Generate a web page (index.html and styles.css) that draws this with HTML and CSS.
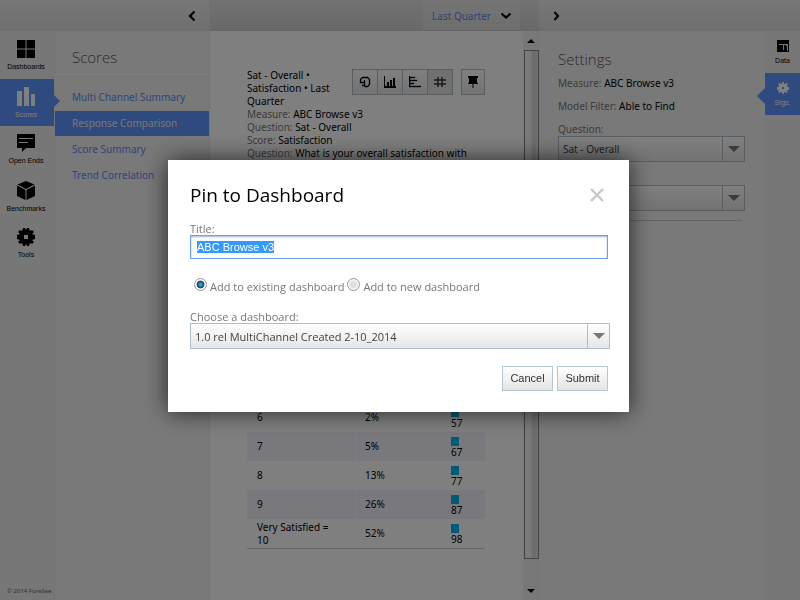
FILE: index.html
```html
<!DOCTYPE html>
<html lang="en">
<head>
<meta charset="utf-8">
<title>Response Comparison</title>
<link rel="stylesheet" href="styles.css">
</head>
<body>
<div class="app">
  <section class="left">
    <header class="bar bar-left">
      <button class="plain" aria-label="Collapse menu"><svg width="8" height="12" viewBox="0 0 8 12"><path d="M6.500 1.500 2 6l4.500 4.500" fill="none" stroke="#000" stroke-width="2.200"/></svg></button>
    </header>
    <div class="left-body">
      <nav class="nav">
        <a href="#" class="nav-item">
          <svg width="18" height="18" viewBox="0 0 18 18"><path d="M0 0h8.500v8.500H0zM9.500 0H18v8.500H9.500zM0 9.500h8.500V18H0zM9.500 9.500H18V18H9.500z"/></svg>
          <span>Dashboards</span></a>
        <a href="#" class="nav-item active">
          <svg width="18" height="19" viewBox="0 0 18 19"><path d="M0 4h5v15H0zM7 0h5v19H7zM14 7h4v12h-4z"/></svg>
          <span>Scores</span></a>
        <a href="#" class="nav-item">
          <svg width="18" height="18" viewBox="0 0 18 18"><path d="M0 0h18v14H9l-4 4v-4H0z"/><path d="M2 4.500h14M2 8.500h9" stroke="#eee" stroke-width="1"/></svg>
          <span>Open Ends</span></a>
        <a href="#" class="nav-item">
          <svg width="18" height="19" viewBox="0 0 18 19"><path d="M9 0l8.500 3.500L9 8 .5 3.500zM0 4.500l8.500 4.500v10L0 15zM18 4.500L9.500 9v10l8.500-4z"/></svg>
          <span>Benchmarks</span></a>
        <a href="#" class="nav-item">
          <svg width="18" height="18" viewBox="0 0 18 18"><path fill-rule="evenodd" d="M6 0h2l1 2 1-2h2l1 3 2-1 2 2-2 2 3 1v4l-3 1 2 2-2 2-2-1-1 3h-2l-1-2-1 2H6l-1-3-2 1-2-2 2-2-3-1V7l3-1-2-2 2-2 2 1zM7 7v4h4V7z"/></svg>
          <span>Tools</span></a>
        <small class="copyright">© 2014 ForeSee</small>
      </nav>
      <aside class="menu">
        <h2>Scores</h2>
        <ul>
          <li><a href="#">Multi Channel Summary</a></li>
          <li><a href="#" class="current">Response Comparison</a></li>
          <li><a href="#">Score Summary</a></li>
          <li><a href="#">Trend Correlation</a></li>
        </ul>
      </aside>
    </div>
  </section>

  <main class="main">
    <header class="bar bar-main">
      <button class="period">Last Quarter
        <svg width="12" height="8" viewBox="0 0 12 8"><path d="M1.500 1.500 6 5.500l4.500-4" fill="none" stroke="#000" stroke-width="2.200"/></svg></button>
    </header>
    <div class="main-body">
      <div class="report">
        <div class="report-text">
          <div class="tools">
            <div class="group">
              <button aria-label="Pie chart"><svg width="12" height="12" viewBox="0 0 12 12"><path d="M3.500 1.500h5l2 2v5l-2 2h-3M3.500 1.500l-2 2v3h4M3 9.500h2.500V4" fill="none" stroke="#000" stroke-width="1.300"/></svg></button>
              <button aria-label="Column chart"><svg width="12" height="12" viewBox="0 0 12 12"><path d="M0 0h1v10h11v2H0zM3 6h2v4H3zM6 4h2v6H6zM9 2h2v8H9z"/></svg></button>
              <button aria-label="Bar chart"><svg width="12" height="12" viewBox="0 0 12 12"><path d="M0 0h1v10h11v1H0zM1 1h5v1H1zM1 4h7v1H1zM1 7h4v1H1z" stroke="#000" stroke-width=".4"/></svg></button>
              <button aria-label="Table" class="pressed"><svg width="12" height="12" viewBox="0 0 12 12"><path d="M4 1v10M8 1v10M0 4h12M0 8h12" stroke="#333" stroke-width="1.400"/></svg></button>
            </div>
            <button aria-label="Pin"><svg width="12" height="12" viewBox="0 0 12 12"><path d="M1 0h10v2h-1v5h1v1H6.500v4h-1V8H1V7h1V2H1z"/></svg></button>
          </div>
          <h1>Sat - Overall • Satisfaction • Last Quarter</h1>
          <p><span>Measure:</span> ABC Browse v3</p>
          <p><span>Question:</span> Sat - Overall</p>
          <p><span>Score:</span> Satisfaction</p>
          <p><span>Question:</span> What is your overall satisfaction with</p>
        </div>
        <table class="scores">
          <tbody>
            <tr><td>6</td><td>2%</td><td><i></i>57</td></tr>
            <tr><td>7</td><td>5%</td><td><i></i>67</td></tr>
            <tr><td>8</td><td>13%</td><td><i></i>77</td></tr>
            <tr><td>9</td><td>26%</td><td><i></i>87</td></tr>
            <tr><td>Very Satisfied = 10</td><td>52%</td><td><i></i>98</td></tr>
          </tbody>
        </table>
      </div>
      <div class="scroll">
        <svg width="8" height="4" viewBox="0 0 8 4"><path d="M4 0l4 4H0z"/></svg>
        <div class="thumb"></div>
        <svg width="8" height="4" viewBox="0 0 8 4"><path d="M4 4L0 0h8z"/></svg>
      </div>
    </div>
  </main>

  <section class="right">
    <header class="bar bar-right">
      <button class="plain" aria-label="Collapse settings"><svg width="8" height="12" viewBox="0 0 8 12"><path d="M1.500 2 5 6 1.500 10" fill="none" stroke="#000" stroke-width="2.200"/></svg></button>
    </header>
    <div class="right-body">
      <form class="settings">
        <h2>Settings</h2>
        <p><span>Measure:</span> ABC Browse v3</p>
        <p><span>Model Filter:</span> Able to Find</p>
        <label for="question">Question:</label>
        <div class="select"><select id="question"><option>Sat - Overall</option></select><svg width="12" height="6" viewBox="0 0 12 6"><path d="M0 0h12L6 6z"/></svg></div>
        <div class="select second"><select aria-label="Score"><option></option></select><svg width="12" height="6" viewBox="0 0 12 6"><path d="M0 0h12L6 6z"/></svg></div>
        <hr>
      </form>
      <nav class="strip">
        <a href="#" class="strip-item"><svg width="12" height="12" viewBox="0 0 12 12"><path fill-rule="evenodd" d="M0 0h12v12H0zM2 4v1h4v5h1V5h2v1h1v5h1V4z"/></svg><span>Data</span></a>
        <a href="#" class="strip-item active"><svg width="12" height="12" viewBox="0 0 12 12"><path fill-rule="evenodd" d="M5 0h2v2h1l1-1 2 1-1 2v1h2v3h-2v1l1 1-2 1-1-1H7v2H5v-2H4l-1 1-2-1 1-2V8H0V5h2V4L1 2l2-1 1 1h1zM5 5v2h2V5z"/></svg><span>Stgs.</span></a>
      </nav>
    </div>
  </section>
</div>

<div class="backdrop">
  <form class="dialog" role="dialog" aria-labelledby="dialog-title">
    <header>
      <h2 id="dialog-title">Pin to Dashboard</h2>
      <button type="button" class="plain" aria-label="Close"><svg width="14" height="14" viewBox="0 0 14 14"><path d="M1 1l12 12M13 1L1 13" stroke="#c8c8c8" stroke-width="2.400"/></svg></button>
    </header>
    <label for="pin-title">Title:</label>
    <input type="text" id="pin-title" value="ABC Browse v3">
    <div class="choices">
      <input type="radio" name="target" id="existing" checked><label for="existing">Add to existing dashboard</label>
      <input type="radio" name="target" id="new"><label for="new">Add to new dashboard</label>
    </div>
    <label for="dashboard">Choose a dashboard:</label>
    <div class="select"><select id="dashboard"><option>1.0 rel MultiChannel Created 2-10_2014</option></select><svg width="12" height="6" viewBox="0 0 12 6"><path d="M0 0h12L6 6z"/></svg></div>
    <footer>
      <button type="button">Cancel</button>
      <button type="button">Submit</button>
    </footer>
  </form>
</div>
<script src="script.js"></script>
</body>
</html>
```
FILE: script.js
```js
const title = document.getElementById("pin-title");
title.focus();
title.select();
```
FILE: styles.css
```css
* { box-sizing: border-box; }
body {
  margin: 0;
  font: 10px/13px "Noto Sans", sans-serif;
  color: #000;
  background: #fff;
}
h1, h2, p, ul { margin: 0; padding: 0; font-weight: normal; }
h1 { font-size: 10px; }
h2 { font: 300 15px/20px "Open Sans", sans-serif; color: #555; }
ul { list-style: none; }
a { text-decoration: none; }
svg { display: block; flex: none; }
button, input, select { font: inherit; color: inherit; margin: 0; }
.plain { border: 0; padding: 0; background: none; }

.app { display: grid; grid-template-columns: 210px 1fr 261px; min-height: 100vh; }
.left, .main, .right { display: flex; flex-direction: column; min-width: 0; }
.bar {
  display: flex;
  align-items: center;
  height: 31px;
  background: linear-gradient(#f0f0f0, #dedede);
}
.bar-left { justify-content: flex-end; padding-right: 13px; border-right: 1px solid #e4e4e4; }
.bar-main { justify-content: flex-end; padding-right: 19px; background: linear-gradient(#e4e4e4, #d2d2d2); border-bottom: 1px solid #ccc; }
.bar-right { padding-left: 14px; }
.period {
  display: flex;
  align-items: center;
  gap: 9px;
  height: 30px;
  padding: 2px 8px 0 9px;
  border: 0;
  color: #5a88e0;
  background: linear-gradient(#eaeaea, #dcdcdc);
}

.left-body, .right-body, .main-body { display: flex; flex: 1; }
.left-body { background: #f3f3f3; border-right: 1px solid #e6e6e6; }
.nav { display: flex; flex-direction: column; width: 54px; background: #eee; padding-top: 1px; }
.nav-item, .strip-item {
  position: relative;
  display: flex;
  flex-direction: column;
  align-items: center;
  font: 7px/10px "Liberation Sans", sans-serif;
  color: #000;
}
.nav-item { height: 47px; padding: 8px 2px 0 0; gap: 4px; }
.active { background: #5c94ff; color: #fff; }
.active svg { fill: #fff; }
.active::after {
  content: "";
  position: absolute;
  width: 6px;
  height: 12px;
  background: #5c94ff;
}
.nav .active::after { left: 100%; top: 16px; clip-path: polygon(0 0, 100% 50%, 0 100%); }
.copyright { margin-top: auto; padding: 0 0 4px 7px; font-size: 6px; line-height: 10px; color: #666; white-space: nowrap; }
.menu { flex: 1; border-left: 1px solid #e8e8e8; }
.menu h2 { padding: 16px 0 7px 17px; border-bottom: 1px solid #fff; }
.menu ul { display: grid; gap: 1px; padding-top: 10px; }
.menu li a { display: block; padding: 6px 17px; color: #5a8cf0; }
.menu li .current { background: #5c94ff; color: #eee; }

.report { flex: 1; display: flex; flex-direction: column; justify-content: space-between; padding: 38px 38px 51px 37px; min-width: 0; }
.report-text p { white-space: nowrap; }
.report-text p span, .settings p span { color: #777; }
.tools { float: right; display: flex; gap: 9px; margin-left: 10px; }
.group { display: flex; }
.tools button {
  display: grid;
  place-items: center;
  width: 24px;
  height: 26px;
  padding: 0;
  border: 1px solid #aebfc4;
  background: linear-gradient(#fff, #e8e8e8);
}
.group button { width: 26px; margin-right: -1px; }
.tools .pressed { background: #e2e2e2; }
.scores { width: 100%; border-spacing: 0; table-layout: fixed; border-bottom: 1px solid #ccc; }
.scores td { height: 29px; padding: 0 9px; }
.scores td:nth-child(1) { width: 109px; padding: 0 24px 0 10px; border-right: 1px solid #fff; }
.scores td:nth-child(2) { width: 86px; }
.scores tr:nth-child(even) { background: #f0f1fa; }
.scores i { display: block; width: 8px; height: 9px; margin-top: 2px; background: #00b4f0; }
.scroll { display: flex; flex-direction: column; align-items: center; gap: 7px; width: 16px; padding: 8px 0 7px; background: #f0f0f0; }
.thumb { flex: 1; width: 15px; margin-bottom: 23px; border: 1px solid #888; background: linear-gradient(90deg, #f4f4f4 45%, #d6d6d8 60%, #e4e4e4); }

.right-body { background: #f3f3f3; border-left: 1px solid #eee; }
.settings { flex: 1; padding: 18px 20px 0 18px; }
.settings h2 { margin-bottom: 8px; }
.settings p { margin-bottom: 10px; }
.settings label { display: block; color: #777; }
.settings hr { height: 1px; margin: 9px 3px 0 0; border: 0; background: #c8c8c8; }
.strip { width: 35px; background: #eee; }
.strip-item { height: 42px; padding-top: 9px; gap: 4px; }
.strip .active::after { right: 100%; top: 15px; width: 8px; height: 16px; clip-path: polygon(100% 0, 100% 100%, 0 50%); }

.select { position: relative; }
.select select {
  appearance: none;
  display: block;
  width: 100%;
  height: 26px;
  padding: 0 28px 0 4px;
  border: 1px solid #aebfc8;
  border-radius: 0;
  color: #444;
  background: linear-gradient(#fff, #e6e6e6);
}
.select::after {
  content: "";
  position: absolute;
  top: 0;
  bottom: 0;
  right: 22px;
  width: 1px;
  background: #aebfc8;
}
.select svg { position: absolute; right: 5px; top: 10px; fill: #777; pointer-events: none; }
.settings .select { max-width: 187px; }
.second { margin-top: 23px; }

.backdrop {
  position: fixed;
  inset: 0;
  display: flex;
  align-items: flex-start;
  justify-content: center;
  padding: 160px 3px 0 0;
  background: rgba(0, 0, 0, .5);
}
.dialog {
  width: 461px;
  padding: 22px 19px 21px 22px;
  background: #fff;
  color: #777;
  font: 11px/13px "Open Sans", sans-serif;
  box-shadow: 0 0 22px rgba(0, 0, 0, .7);
}
.dialog header { display: flex; justify-content: space-between; align-items: center; padding-right: 6px; margin-bottom: 15px; }
.dialog h2 { font-size: 19px; font-weight: 400; line-height: 26px; color: #000; }
.dialog > label { display: block; line-height: 12px; }
.dialog input[type="text"] {
  display: block;
  width: calc(100% - 2px);
  height: 24px;
  padding: 0 6px;
  border: 1px solid #6ea2e8;
  outline: 0;
  box-shadow: inset 0 1px 2px #9ab8e0;
  font-family: "Liberation Sans", sans-serif;
}
.dialog input::selection { background: #3399ff; color: #fff; }
.choices { display: flex; align-items: center; gap: 3px; padding: 19px 0 16px 4px; }
.choices label { line-height: 16px; }
.choices input {
  appearance: none;
  width: 13px;
  height: 13px;
  margin-bottom: 4px;
  border: 1px solid #999;
  border-radius: 50%;
  background: radial-gradient(#ddd 30%, #fff 75%);
}
.choices input:checked { background: radial-gradient(#3ba4d8 10%, #10405c 45%, #fff 55%); }
.dialog footer { display: flex; justify-content: flex-end; gap: 4px; margin-top: 17px; padding-right: 2px; }
.dialog footer button {
  min-width: 51px;
  height: 25px;
  padding: 0 7px;
  border: 1px solid #b4c8d0;
  color: #333;
  background: linear-gradient(#fff, #e4e4e4);
  font-family: "Liberation Sans", sans-serif;
}
```
